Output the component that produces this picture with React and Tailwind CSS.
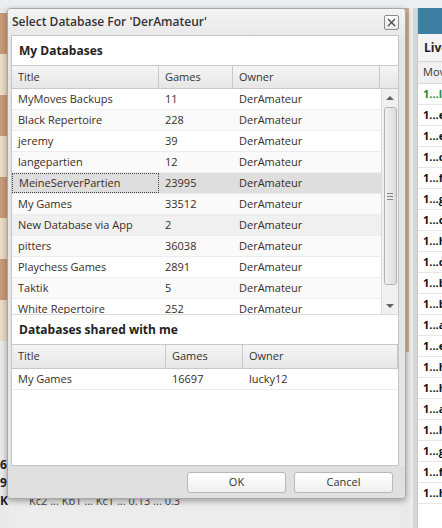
import React from "react";

const myDbs = [
    { title: "MyMoves Backups", games: "11", owner: "DerAmateur" },
    { title: "Black Repertoire", games: "228", owner: "DerAmateur" },
    { title: "jeremy", games: "39", owner: "DerAmateur" },
    { title: "langepartien", games: "12", owner: "DerAmateur" },
    { title: "MeineServerPartien", games: "23995", owner: "DerAmateur", selected: true },
    { title: "My Games", games: "33512", owner: "DerAmateur" },
    { title: "New Database via App", games: "2", owner: "DerAmateur", hover: true },
    { title: "pitters", games: "36038", owner: "DerAmateur" },
    { title: "Playchess Games", games: "2891", owner: "DerAmateur" },
    { title: "Taktik", games: "5", owner: "DerAmateur" },
    { title: "White Repertoire", games: "252", owner: "DerAmateur" },
];

const moves = ["l", "e", "e", "c", "f", "g", "c", "h", "c", "b", "b", "a", "e", "h", "h", "a", "h", "g", "f", "h"];

const boardSquares = [0, 1, 2, 3, 4, 5, 6, 7];

const HeaderCell = ({ children }) => (
    <div className="h-full flex items-center pl-[6px] border-r border-[#c8c8c8]">
        {children}
    </div>
);

const Background = () => (
    <div className="absolute inset-0 flex flex-col">
        <div className="h-[8px] bg-[#eceef1] shrink-0" />
        <div className="flex flex-1">
            {/* board edge */}
            <div className="w-[9px] flex flex-col bg-[#e9e9e9] overflow-hidden">
                <div className="h-[5px]" />
                {boardSquares.map((i) => (
                    <div
                        key={i}
                        className={`h-[41px] ${i % 2 === 0 ? "bg-[#c99a78]" : "bg-[#eddcc4]"}`}
                    />
                ))}
                <div className="flex-1 flex flex-col justify-end pb-[18px] text-[12px] leading-[18px] font-bold text-[#222]">
                    <span>6</span>
                    <span>9</span>
                    <span>K</span>
                </div>
            </div>
            <div className="flex-1 bg-[#ececec] flex flex-col justify-end pb-[20px] pl-[20px]">
                <div className="text-[11px] leading-[14px] text-[#444]">Kc2 ... Kb1 ... Kc1 ... 0.13 ... 0.3</div>
            </div>
            {/* wood strip */}
            <div className="w-[8px] flex flex-col bg-[#e9e9e9]">
                <div className="h-[344px] bg-[#cdb08f]" />
            </div>
            <div className="w-[4px] bg-[#ececec]" />
            <div className="w-[4px] bg-[#d6d6d6]" />
            {/* right panel */}
            <div className="w-[25px] bg-white flex flex-col border-l border-[#c8c8c8] overflow-hidden">
                <div className="h-[26px] bg-[#3d7fa2] shrink-0" />
                <div className="h-[28px] bg-[#f4f4f4] border-b border-[#d8d8d8] flex items-center pl-[6px] font-bold text-[12px] text-[#222] whitespace-nowrap">
                    Live
                </div>
                <div className="h-[22px] bg-[#f0f0f0] border-b border-[#d8d8d8] flex items-center pl-[5px] text-[11px] text-[#333] whitespace-nowrap">
                    Moves
                </div>
                {moves.map((m, i) => (
                    <div
                        key={i}
                        className={`h-[21px] shrink-0 border-b border-[#e6e6e6] flex items-center pl-[5px] text-[11px] font-bold whitespace-nowrap ${i === 0 ? "text-[#2e8b2e]" : "text-[#111]"}`}
                    >
                        1...{m}
                    </div>
                ))}
            </div>
        </div>
    </div>
);

const ScrollBar = () => (
    <div className="w-[17px] h-full bg-[#f0f0f0] border-l border-[#dcdcdc] flex flex-col items-center">
        <div className="h-[18px] flex items-center justify-center">
            <div className="w-0 h-0 border-l-[4px] border-r-[4px] border-b-[4px] border-l-transparent border-r-transparent border-b-[#606060]" />
        </div>
        <div className="w-[13px] h-[178px] rounded-[3px] border border-[#b4b4b4] bg-gradient-to-r from-[#f2f2f2] to-[#dcdcdc] flex flex-col items-center justify-center gap-[2px]">
            <div className="w-[6px] h-px bg-[#888]" />
            <div className="w-[6px] h-px bg-[#888]" />
            <div className="w-[6px] h-px bg-[#888]" />
        </div>
        <div className="flex-1 flex items-end justify-center pb-[6px]">
            <div className="w-0 h-0 border-l-[4px] border-r-[4px] border-t-[4px] border-l-transparent border-r-transparent border-t-[#606060]" />
        </div>
    </div>
);

const Dialog = () => (
    <div className="absolute left-[7px] top-[8px] w-[399px] h-[491px] rounded-[4px] border border-[#a8a8a8] bg-[#e6e6e6] shadow-[0_2px_6px_rgba(0,0,0,0.35)] flex flex-col overflow-hidden">
        {/* title bar */}
        <div className="h-[26px] shrink-0 bg-gradient-to-b from-[#f4f4f4] to-[#e9e9e9] flex items-center justify-between pl-[4px] pr-[6px]">
            <span className="text-[12px] font-semibold text-[#333]">Select Database For 'DerAmateur'</span>
            <div className="w-[15px] h-[15px] border border-[#8c8c8c] rounded-[2px] bg-gradient-to-b from-white to-[#e8e8e8] flex items-center justify-center">
                <svg width="9" height="9" viewBox="0 0 9 9">
                    <path d="M1 1 L8 8 M8 1 L1 8" stroke="#444" strokeWidth="1.2" />
                </svg>
            </div>
        </div>

        {/* content */}
        <div className="flex-1 ml-[3px] mr-[6px] bg-white border border-[#c4c4c4] flex flex-col min-h-0">
            <div className="h-[29px] shrink-0 flex items-center pl-[7px] text-[12px] font-bold text-[#222]">
                My Databases
            </div>
            {/* table 1 */}
            <div className="h-[249px] shrink-0 flex flex-col border-t border-[#c8c8c8]">
                <div className="h-[23px] shrink-0 grid grid-cols-[147px_74px_147px_1fr] bg-gradient-to-b from-[#f5f5f5] to-[#e6e6e6] border-b border-[#c8c8c8] text-[11px] text-[#333]">
                    <HeaderCell>Title</HeaderCell>
                    <HeaderCell>Games</HeaderCell>
                    <HeaderCell>Owner</HeaderCell>
                    <div />
                </div>
                <div className="flex-1 flex min-h-0">
                    <div className="flex-1 overflow-hidden">
                        {myDbs.map((r, i) => (
                            <div
                                key={r.title}
                                className={`h-[21px] grid grid-cols-[147px_74px_147px] border-b border-[#ececec] text-[11px] text-[#3a2d1c] ${
                                    r.selected ? "bg-[#dedede]" : r.hover ? "bg-[#f0f0f0]" : i % 2 === 1 ? "bg-[#fafafa]" : "bg-white"
                                }`}
                            >
                                <div className={`flex items-center pl-[6px] ${r.selected ? "border border-dotted border-[#444]" : ""}`}>{r.title}</div>
                                <div className="flex items-center pl-[6px]">{r.games}</div>
                                <div className="flex items-center pl-[6px]">{r.owner}</div>
                            </div>
                        ))}
                    </div>
                    <ScrollBar />
                </div>
            </div>

            <div className="h-[30px] shrink-0 flex items-center pl-[7px] text-[12px] font-bold text-[#222] border-t border-[#dcdcdc]">
                Databases shared with me
            </div>
            {/* table 2 */}
            <div className="flex-1 flex flex-col border-t border-[#c8c8c8]">
                <div className="h-[24px] shrink-0 grid grid-cols-[154px_77px_1fr] bg-gradient-to-b from-[#f5f5f5] to-[#e6e6e6] border-b border-[#c8c8c8] text-[11px] text-[#333]">
                    <HeaderCell>Title</HeaderCell>
                    <HeaderCell>Games</HeaderCell>
                    <HeaderCell>Owner</HeaderCell>
                </div>
                <div className="h-[21px] grid grid-cols-[154px_77px_1fr] border-b border-[#ececec] text-[11px] text-[#3a2d1c]">
                    <div className="flex items-center pl-[6px]">My Games</div>
                    <div className="flex items-center pl-[6px]">16697</div>
                    <div className="flex items-center pl-[6px]">lucky12</div>
                </div>
            </div>
        </div>

        {/* footer */}
        <div className="h-[32px] shrink-0 bg-[#e0e0e0] flex items-center justify-end gap-[8px] pr-[12px] pt-[1px]">
            <button className="w-[99px] h-[21px] rounded-[3px] border border-[#b8b8b8] bg-gradient-to-b from-white to-[#f0f0f0] text-[11px] text-[#333]">
                OK
            </button>
            <button className="w-[99px] h-[21px] rounded-[3px] border border-[#b8b8b8] bg-gradient-to-b from-white to-[#f0f0f0] text-[11px] text-[#333]">
                Cancel
            </button>
        </div>
    </div>
);

export default function App() {
    return (
        <div className="relative w-[442px] h-[528px] overflow-hidden bg-white font-['Open_Sans',sans-serif]">
            <Background />
            <Dialog />
        </div>
    );
}
